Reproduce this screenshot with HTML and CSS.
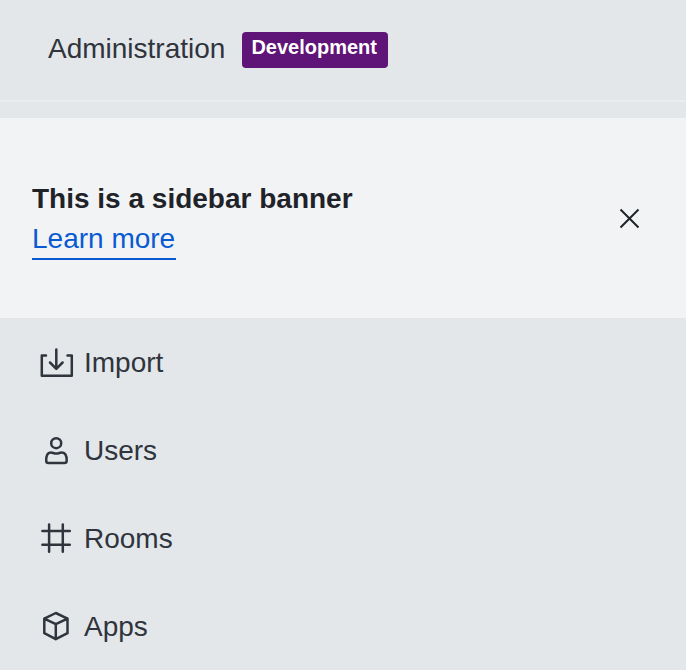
FILE: index.html
```html
<!DOCTYPE html>
<html lang="en">
<head>
<meta charset="utf-8">
<title>Administration</title>
<link rel="stylesheet" href="styles.css">
</head>
<body>
<aside class="sidebar">
  <header class="header">
    <h1 class="title">Administration</h1>
    <span class="tag">Development</span>
  </header>
  <section class="banner">
    <div>
      <h2 class="banner-title">This is a sidebar banner</h2>
      <a class="banner-link" href="#">Learn more</a>
    </div>
    <button class="close" type="button" aria-label="Close">
      <svg viewBox="0 0 40 40"><path d="M11.500 11.500 29.500 29.500M29.500 11.500 11.500 29.500"/></svg>
    </button>
  </section>
  <nav>
    <a class="item" href="#"><svg class="icon" viewBox="0 0 40 40"><path d="M10 13.600H5.800V33.800H35.800V13.600H31.500M20.300 7.400V26.500M14 20.500 20.300 26.800 26.600 20.500"/></svg><span class="label">Import</span></a>
    <a class="item" href="#"><svg class="icon" viewBox="0 0 40 40"><circle cx="20.200" cy="13.200" r="5"/><path d="M14.500 22.500C16.500 22.300 17.800 23.500 20.300 23.500S24.100 22.300 26.100 22.500C29.500 22.700 30.700 26.300 30.700 30.500C30.700 32.300 30 33.100 28.300 33.100H12.500C10.800 33.100 10.200 32.300 10.200 30.500C10.200 26.300 11.300 22.700 14.500 22.500Z"/></svg><span class="label">Users</span></a>
    <a class="item" href="#"><svg class="icon" viewBox="0 0 40 40"><path d="M6.400 13.100H33.800M6.400 26.800H33.800M13.100 6.400V33.800M26.800 6.400V33.800"/></svg><span class="label">Rooms</span></a>
    <a class="item" href="#"><svg class="icon" viewBox="0 0 40 40"><path d="M19.800 7 31.500 12.600V27.200L19.800 33.200 8.300 27.200V12.600ZM8.300 12.600 19.800 18.200 31.500 12.600M19.800 18.200V33.200"/></svg><span class="label">Apps</span></a>
  </nav>
</aside>
</body>
</html>
```
FILE: styles.css
```css
* { box-sizing: border-box; }
body { margin: 0; min-height: 100vh; background: #e4e7ea; color: #2f343d; font-family: "Liberation Sans", Arial, sans-serif; font-size: 28px; line-height: 40px; }
.header { display: flex; align-items: center; gap: 17px; height: 102px; padding: 0 48px; border-bottom: 2px solid #ebecef; margin-bottom: 16px; }
.title { margin: 0; padding-bottom: 2px; font-size: 28px; font-weight: 400; }
.tag { padding: 0 11px 6px 9px; border-radius: 4px; background: #5f1477; color: #fff; font-size: 20px; font-weight: 700; line-height: 30px; }
.banner { display: flex; align-items: center; justify-content: space-between; min-height: 200px; padding: 2px 32px 0; background: #f2f3f5; }
.banner-title { margin: 0; color: #1f2329; font-size: 28px; line-height: 42px; }
.banner-link { display: block; width: fit-content; padding-right: 1px; border-bottom: 2px solid #095ad2; color: #095ad2; line-height: 38px; text-decoration: none; }
.close { width: 50px; height: 50px; margin-bottom: 2px; padding: 5px; border: 0; background: none; color: #1f2329; }
svg { display: block; width: 40px; height: 40px; fill: none; stroke: currentColor; stroke-width: 2; }
.item { display: flex; align-items: center; gap: 8px; height: 88px; padding: 0 36px; color: inherit; text-decoration: none; }
.label { padding-top: 2px; }
.icon { stroke-width: 2.500; stroke-linecap: round; stroke-linejoin: round; }
```
